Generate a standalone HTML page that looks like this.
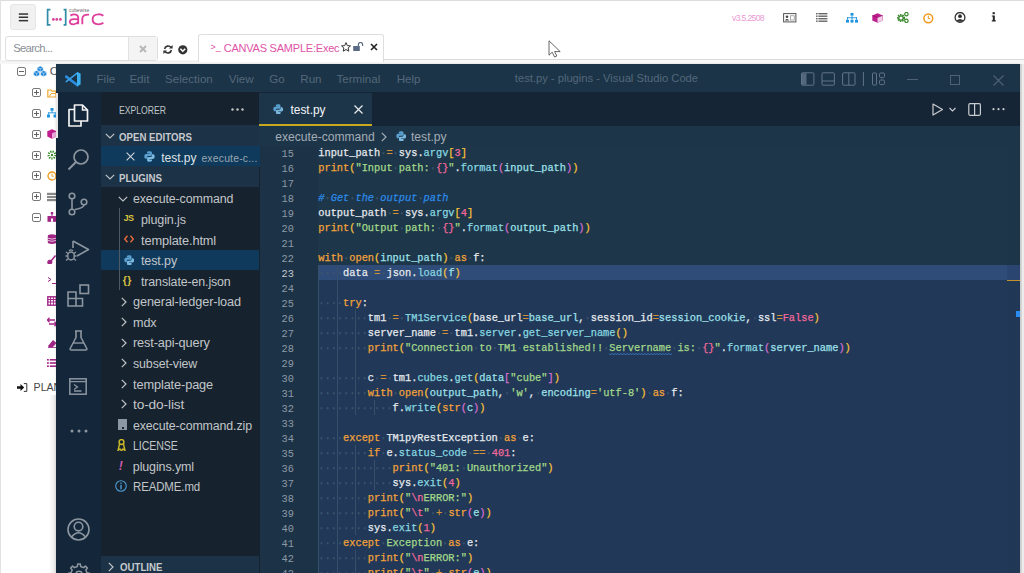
<!DOCTYPE html>
<html><head><meta charset="utf-8">
<style>
*{margin:0;padding:0;box-sizing:border-box}
html,body{width:1024px;height:573px;overflow:hidden;background:#fff}
body{position:relative;font-family:"Liberation Sans",sans-serif}
.a{position:absolute}
.txt{position:absolute;white-space:pre;line-height:1}
/* ---- vscode ---- */
.ln{position:absolute;left:318.3px;height:15px;line-height:15px;font-family:"Liberation Mono",monospace;font-size:10.32px;white-space:pre;color:#e6eaee;-webkit-text-stroke:0.25px currentColor}
.ws{color:#3f5870}
.num{position:absolute;left:262px;width:32px;text-align:right;height:15px;line-height:15px;font-family:"Liberation Mono",monospace;font-size:10.32px;color:#8d9aa6}
.num.act{color:#c4cad0}
.guide{position:absolute;width:1px;background:#36506a}
.row{position:absolute;left:100px;width:159px;height:20.57px}
.row .t{position:absolute;top:0;line-height:20.57px;font-size:12.1px;color:#c2c6ca;white-space:pre}
.chev{position:absolute;width:6px;height:6px;border-right:1.3px solid #c0c4c8;border-bottom:1.3px solid #c0c4c8}
.aicon{position:absolute;left:56px;width:44px}
</style></head><body>

<!-- ============ background web app ============ -->
<div class="a" style="left:0;top:0;width:1024px;height:1px;background:#dcdcdc"></div>
<div class="a" style="left:0;top:0;width:1px;height:573px;background:#e2e2e2"></div>

<!-- hamburger -->
<div class="a" style="left:10px;top:4px;width:26px;height:25.5px;background:#f1f1f1;border:1px solid #e6e6e6;border-radius:3px"></div>
<svg class="a" style="left:18px;top:12px" width="11" height="11" viewBox="0 0 11 11"><g fill="#333"><rect x="0.8" y="1.3" width="9.3" height="1.5"/><rect x="0.8" y="4.5" width="9.3" height="1.5"/><rect x="0.8" y="7.9" width="9.3" height="1.5"/></g></svg>

<!-- logo -->
<svg class="a" style="left:44px;top:5px" width="64" height="24" viewBox="0 0 64 24">
  <path d="M6.4 4.6 H3.6 V19.8 H6.4" fill="none" stroke="#2f8ba6" stroke-width="1.7"/>
  <path d="M19.6 4.6 H21.7 V19.8 H19.6" fill="none" stroke="#2f8ba6" stroke-width="1.7"/>
  <circle cx="9.4" cy="14.4" r="1.4" fill="#d9419a"/>
  <circle cx="12.8" cy="14.4" r="1.4" fill="#d9419a"/>
  <circle cx="16.4" cy="14.4" r="1.4" fill="#d9419a"/>
  <path d="M26.4 10.6 Q29.5 8.6 32.6 9.8 Q34.2 10.5 34.2 12.6 V19.2 M34.2 14.4 Q26 13.4 25.8 16.6 Q25.8 19.4 29.6 19.3 Q32.8 19.1 34.2 16.8" fill="none" stroke="#df3f9c" stroke-width="1.85"/>
  <path d="M38.3 19.3 V14 Q38.3 9.4 45 9.6" fill="none" stroke="#df3f9c" stroke-width="1.85"/>
  <path d="M59.4 10.8 Q57.4 9.2 54.4 9.3 Q48.6 9.5 48.6 14.3 Q48.6 19.2 54.4 19.3 Q57.4 19.3 59.4 17.8" fill="none" stroke="#df3f9c" stroke-width="1.85"/>
</svg>
<div class="txt" style="left:69px;top:9px;font-size:4.6px;color:#666;letter-spacing:0.15px">cubewise</div>

<!-- version + top icons -->
<div class="txt" style="left:732px;top:14.4px;font-size:8.6px;color:#e99ad4;letter-spacing:-0.64px">v3.5.2508</div>
<!-- id card -->
<svg class="a" style="left:783px;top:12.5px" width="14" height="10" viewBox="0 0 14 10">
  <rect x="0.6" y="0.6" width="12.3" height="8.3" fill="#fff" stroke="#555" stroke-width="1"/>
  <circle cx="4" cy="3.8" r="1.3" fill="#444"/><path d="M1.9 7.4 Q4 4.8 6.1 7.4Z" fill="#444"/>
  <rect x="7.4" y="2.8" width="3.8" height="4.2" fill="none" stroke="#888" stroke-width="0.7"/>
</svg>
<!-- list -->
<svg class="a" style="left:815.5px;top:12.8px" width="12" height="9" viewBox="0 0 12 9">
  <g fill="#666"><rect x="0" y="0" width="1.6" height="1.4"/><rect x="2.4" y="0" width="9" height="1.4"/>
  <rect x="0" y="2.5" width="1.6" height="1.4"/><rect x="2.4" y="2.5" width="9" height="1.4"/>
  <rect x="0" y="5" width="1.6" height="1.4"/><rect x="2.4" y="5" width="9" height="1.4"/>
  <rect x="0" y="7.5" width="1.6" height="1.4"/><rect x="2.4" y="7.5" width="9" height="1.4"/></g>
</svg>
<!-- sitemap -->
<svg class="a" style="left:845.5px;top:12.5px" width="12" height="10" viewBox="0 0 12 10">
  <g fill="#1e93de"><rect x="4.5" y="0" width="3" height="2.6"/><rect x="0" y="6.8" width="3" height="2.8"/><rect x="4.5" y="6.8" width="3" height="2.8"/><rect x="9" y="6.8" width="3" height="2.8"/>
  <rect x="5.6" y="2.6" width="0.9" height="4.2"/><rect x="1.1" y="4.3" width="9.9" height="0.9"/><rect x="1.1" y="4.3" width="0.9" height="2.5"/><rect x="10.1" y="4.3" width="0.9" height="2.5"/></g>
</svg>
<!-- cube -->
<svg class="a" style="left:871.5px;top:12.8px" width="11" height="10" viewBox="0 0 11 10">
  <path d="M5.5 0.3 L10.7 2.4 V7.6 L5.5 9.8 L0.3 7.6 V2.4Z" fill="#c01d8e"/>
  <path d="M5.5 4.4 L10.5 2.5 V7.5 L5.5 9.6Z" fill="#f3d0ea"/>
  <path d="M0.3 2.4 L5.5 4.5 L10.7 2.4" fill="none" stroke="#7a0f5a" stroke-width="0.5"/>
</svg>
<!-- cogs -->
<svg class="a" style="left:897px;top:12px" width="12" height="11" viewBox="0 0 12 11">
  <circle cx="4" cy="6" r="3.2" fill="none" stroke="#3b8a2e" stroke-width="1.8" stroke-dasharray="1.4 0.9"/>
  <circle cx="4" cy="6" r="2.2" fill="none" stroke="#3b8a2e" stroke-width="1.3"/>
  <circle cx="9.4" cy="2.2" r="1.7" fill="none" stroke="#3b8a2e" stroke-width="1.2"/>
  <circle cx="9.4" cy="8.8" r="1.7" fill="none" stroke="#3b8a2e" stroke-width="1.2"/>
</svg>
<!-- clock -->
<svg class="a" style="left:923px;top:12.6px" width="11" height="11" viewBox="0 0 11 11">
  <circle cx="5.3" cy="5.3" r="4.4" fill="none" stroke="#ef9a1c" stroke-width="1.5"/>
  <path d="M5.3 2.6 V5.6 H7.2" fill="none" stroke="#ef9a1c" stroke-width="1"/>
</svg>
<!-- user -->
<svg class="a" style="left:953.5px;top:12px" width="13" height="11" viewBox="0 0 13 11">
  <circle cx="6" cy="5.4" r="4.9" fill="none" stroke="#333" stroke-width="1.3"/>
  <circle cx="6" cy="4.2" r="1.9" fill="#333"/>
  <path d="M2.6 8.6 Q6 5.2 9.4 8.6 L8 9.8 H4Z" fill="#333"/>
</svg>
<!-- info -->
<svg class="a" style="left:990.5px;top:12px" width="6" height="10" viewBox="0 0 6 10">
  <rect x="1.6" y="0.2" width="2.2" height="2" fill="#222"/>
  <path d="M0.8 3.4 H3.8 V8.2 H4.8 V9.4 H0.8 V8.2 H1.8 V4.6 H0.8Z" fill="#222"/>
</svg>

<!-- search -->
<div class="a" style="left:0;top:59.6px;width:1024px;height:4.4px;background:#f7f7f7"></div>

<div class="a" style="left:5px;top:35.5px;width:153px;height:25px;border:1px solid #dedede;border-radius:3px;background:#fff"></div>
<div class="a" style="left:128px;top:36.5px;width:29px;height:23px;background:#f4f4f4;border-left:1px solid #e2e2e2"></div>
<div class="txt" style="left:13.2px;top:43px;font-size:11.3px;color:#8a8f95;letter-spacing:-0.7px">Search...</div>
<svg class="a" style="left:139px;top:45px" width="8" height="8" viewBox="0 0 8 8"><path d="M1 1 L7 7 M7 1 L1 7" stroke="#b6b6b6" stroke-width="1.8"/></svg>
<!-- refresh -->
<svg class="a" style="left:162.5px;top:44.5px" width="10" height="9" viewBox="0 0 10 9">
  <path d="M1.6 4 A3.6 3.6 0 0 1 8 2.4" fill="none" stroke="#333" stroke-width="1.6"/>
  <path d="M8.4 5 A3.6 3.6 0 0 1 2 6.6" fill="none" stroke="#333" stroke-width="1.6"/>
  <path d="M9.6 0 V3.6 H6Z" fill="#333"/><path d="M0.4 9 V5.4 H4Z" fill="#333"/>
</svg>
<!-- chevron circle -->
<svg class="a" style="left:177.5px;top:44.5px" width="10" height="10" viewBox="0 0 10 10">
  <circle cx="4.8" cy="4.8" r="4.6" fill="#333"/>
  <path d="M2.4 3.8 L4.8 6.2 L7.2 3.8" fill="none" stroke="#fff" stroke-width="1.6"/>
</svg>

<!-- lines under header -->
<div class="a" style="left:0;top:61.2px;width:198px;height:1px;background:#efefef"></div>
<div class="a" style="left:383.5px;top:58.6px;width:641px;height:1px;background:#dadada"></div>
<!-- canvas tab -->
<div class="a" style="left:197.5px;top:33.7px;width:186px;height:28px;background:#fff;border:1px solid #dedede;border-bottom:none;border-radius:3px 3px 0 0"></div>
<div class="txt" style="left:210.5px;top:43px;font-size:9px;color:#e052a8">&gt;_</div>
<div class="txt" style="left:223.7px;top:42.5px;font-size:11px;color:#e052a8;letter-spacing:-0.22px">CANVAS SAMPLE:Exec</div>
<svg class="a" style="left:340.5px;top:41.5px" width="10" height="10" viewBox="0 0 10 10">
  <path d="M5 0.6 L6.3 3.6 L9.5 3.9 L7.1 6 L7.8 9.2 L5 7.5 L2.2 9.2 L2.9 6 L0.5 3.9 L3.7 3.6Z" fill="none" stroke="#333" stroke-width="1"/>
</svg>
<svg class="a" style="left:353px;top:42px" width="11" height="9" viewBox="0 0 11 9">
  <rect x="0.2" y="4" width="6.6" height="5" fill="#5a6a84"/>
  <path d="M5.4 4 V2.6 A2.1 2.1 0 0 1 9.6 2.6 V4" fill="none" stroke="#5a6a84" stroke-width="1.2"/>
</svg>
<svg class="a" style="left:370px;top:43px" width="8" height="8" viewBox="0 0 8 8"><path d="M1 1 L7 7 M7 1 L1 7" stroke="#222" stroke-width="1.6"/></svg>

<!-- mouse cursor -->
<svg class="a" style="left:547.5px;top:39.5px" width="14" height="19" viewBox="0 0 14 19">
  <path d="M1 0.8 V15.2 L4.2 12.2 L6.6 17 L8.8 16 L6.6 11.6 H12.2Z" fill="#fff" stroke="#555" stroke-width="0.9" stroke-linejoin="round"/>
</svg>

<!-- left tree (background) -->
<svg class="a" style="left:17px;top:67px" width="9" height="9" viewBox="0 0 9 9"><rect x="0.5" y="0.5" width="8" height="8" rx="1.5" fill="#fff" stroke="#6a6a6a" stroke-width="0.9"/><path d="M2 4.5 H7" stroke="#555" stroke-width="0.9"/></svg>
<svg class="a" style="left:32.5px;top:66px" width="15" height="12" viewBox="0 0 15 12"><path d="M4.2 1.4 L7.2 0 L10.2 1.4 V4.6 L7.2 6 L4.2 4.6Z" fill="#1e86d8" stroke="#fff" stroke-width="0.5"/><path d="M4.2 1.4 L7.2 2.8 L10.2 1.4 M7.2 2.8 V6" fill="none" stroke="#cfe6f8" stroke-width="0.6"/><path d="M0.6 6.0 L3.6 4.6 L6.6 6.0 V9.2 L3.6 10.6 L0.6 9.2Z" fill="#1e86d8" stroke="#fff" stroke-width="0.5"/><path d="M0.6 6.0 L3.6 7.3999999999999995 L6.6 6.0 M3.6 7.3999999999999995 V10.6" fill="none" stroke="#cfe6f8" stroke-width="0.6"/><path d="M7.6 6.0 L10.6 4.6 L13.6 6.0 V9.2 L10.6 10.6 L7.6 9.2Z" fill="#1e86d8" stroke="#fff" stroke-width="0.5"/><path d="M7.6 6.0 L10.6 7.3999999999999995 L13.6 6.0 M10.6 7.3999999999999995 V10.6" fill="none" stroke="#cfe6f8" stroke-width="0.6"/></svg>
<div class="txt" style="left:49.8px;top:66px;font-size:11.5px;color:#555">C</div>

<svg class="a" style="left:32.3px;top:88.2px" width="9" height="9" viewBox="0 0 9 9"><rect x="0.5" y="0.5" width="8" height="8" rx="1.5" fill="#fff" stroke="#6a6a6a" stroke-width="0.9"/><path d="M2 4.5 H7" stroke="#555" stroke-width="0.9"/><path d="M4.5 2 V7" stroke="#555" stroke-width="0.9"/></svg><svg class="a" style="left:32.3px;top:109.0px" width="9" height="9" viewBox="0 0 9 9"><rect x="0.5" y="0.5" width="8" height="8" rx="1.5" fill="#fff" stroke="#6a6a6a" stroke-width="0.9"/><path d="M2 4.5 H7" stroke="#555" stroke-width="0.9"/><path d="M4.5 2 V7" stroke="#555" stroke-width="0.9"/></svg><svg class="a" style="left:32.3px;top:129.79999999999998px" width="9" height="9" viewBox="0 0 9 9"><rect x="0.5" y="0.5" width="8" height="8" rx="1.5" fill="#fff" stroke="#6a6a6a" stroke-width="0.9"/><path d="M2 4.5 H7" stroke="#555" stroke-width="0.9"/><path d="M4.5 2 V7" stroke="#555" stroke-width="0.9"/></svg><svg class="a" style="left:32.3px;top:150.6px" width="9" height="9" viewBox="0 0 9 9"><rect x="0.5" y="0.5" width="8" height="8" rx="1.5" fill="#fff" stroke="#6a6a6a" stroke-width="0.9"/><path d="M2 4.5 H7" stroke="#555" stroke-width="0.9"/><path d="M4.5 2 V7" stroke="#555" stroke-width="0.9"/></svg><svg class="a" style="left:32.3px;top:171.39999999999998px" width="9" height="9" viewBox="0 0 9 9"><rect x="0.5" y="0.5" width="8" height="8" rx="1.5" fill="#fff" stroke="#6a6a6a" stroke-width="0.9"/><path d="M2 4.5 H7" stroke="#555" stroke-width="0.9"/><path d="M4.5 2 V7" stroke="#555" stroke-width="0.9"/></svg><svg class="a" style="left:32.3px;top:192.2px" width="9" height="9" viewBox="0 0 9 9"><rect x="0.5" y="0.5" width="8" height="8" rx="1.5" fill="#fff" stroke="#6a6a6a" stroke-width="0.9"/><path d="M2 4.5 H7" stroke="#555" stroke-width="0.9"/><path d="M4.5 2 V7" stroke="#555" stroke-width="0.9"/></svg><svg class="a" style="left:32.3px;top:213.0px" width="9" height="9" viewBox="0 0 9 9"><rect x="0.5" y="0.5" width="8" height="8" rx="1.5" fill="#fff" stroke="#6a6a6a" stroke-width="0.9"/><path d="M2 4.5 H7" stroke="#555" stroke-width="0.9"/></svg><svg class="a" style="left:47px;top:87.5px" width="10" height="10" viewBox="0 0 10 10"><path d="M0.8 2 H4 L5 3.2 H9 V9 H0.8Z" fill="none" stroke="#f0a830" stroke-width="1.2"/><path d="M2 9 L4 5.5 H10" fill="none" stroke="#f0a830" stroke-width="1"/></svg><svg class="a" style="left:47px;top:108.3px" width="10" height="10" viewBox="0 0 10 10"><g fill="#1e93de"><rect x="3.5" y="0" width="3" height="2.8"/><rect x="0" y="6.5" width="3" height="3"/><rect x="6.5" y="6.5" width="3" height="3"/><rect x="4.6" y="2.8" width="0.9" height="2"/><rect x="1.2" y="4.4" width="7.4" height="0.9"/><rect x="1.2" y="4.4" width="0.9" height="2.2"/><rect x="7.8" y="4.4" width="0.9" height="2.2"/></g></svg><svg class="a" style="left:47px;top:129.1px" width="10" height="10" viewBox="0 0 10 10"><path d="M5 0.3 L9.7 2.3 V7.5 L5 9.7 L0.3 7.5 V2.3Z" fill="#c01d8e"/><path d="M5 4.3 L9.5 2.4 V7.4 L5 9.5Z" fill="#e8a8d8"/></svg><svg class="a" style="left:47px;top:149.9px" width="10" height="10" viewBox="0 0 10 10"><circle cx="5" cy="5" r="3.4" fill="none" stroke="#3b8a2e" stroke-width="2.2" stroke-dasharray="1.3 1"/><circle cx="5" cy="5" r="1.2" fill="#3b8a2e"/></svg><svg class="a" style="left:47px;top:170.7px" width="10" height="10" viewBox="0 0 10 10"><circle cx="5" cy="5" r="4" fill="none" stroke="#ef9a1c" stroke-width="1.3"/><path d="M5 2.6 V5.2 H6.8" fill="none" stroke="#ef9a1c" stroke-width="0.9"/></svg><svg class="a" style="left:47px;top:191.5px" width="10" height="10" viewBox="0 0 10 10"><g fill="#888"><rect x="0" y="0.8" width="10" height="2.2"/><rect x="0" y="3.9" width="10" height="2.2"/><rect x="0" y="7" width="10" height="2.2"/></g></svg><svg class="a" style="left:47px;top:212.3px" width="10" height="10" viewBox="0 0 10 10"><g fill="#a02585"><rect x="3.8" y="0" width="2.4" height="2.5"/><rect x="0.5" y="4" width="9" height="5.8"/><rect x="4.5" y="2.5" width="1" height="1.5"/></g><rect x="4" y="6.5" width="2" height="3.3" fill="#fff"/></svg><svg class="a" style="left:47px;top:233.6px" width="10" height="10" viewBox="0 0 10 10"><g fill="#a02585"><ellipse cx="5" cy="2" rx="4.2" ry="1.7"/><rect x="0.8" y="2" width="8.4" height="6.3"/><ellipse cx="5" cy="8.3" rx="4.2" ry="1.7"/></g><path d="M0.8 4.2 Q5 6 9.2 4.2 M0.8 6.4 Q5 8.2 9.2 6.4" fill="none" stroke="#fff" stroke-width="0.7"/></svg><svg class="a" style="left:47px;top:254.4px" width="10" height="10" viewBox="0 0 10 10"><path d="M1 8.5 Q1 6.5 3 6.6 Q5 6.8 4.6 8.6 Q4 10 2.4 9.8 Q1 9.6 1 8.5Z M4 7 L8.5 1.5" fill="#a02585" stroke="#a02585" stroke-width="1.5"/></svg><svg class="a" style="left:47px;top:275.2px" width="10" height="10" viewBox="0 0 10 10"><path d="M1 2.5 L4 4.5 L1 6.5" fill="none" stroke="#a02585" stroke-width="1"/><path d="M5 8.5 H9.5" stroke="#a02585" stroke-width="1"/></svg><svg class="a" style="left:47px;top:296.0px" width="10" height="10" viewBox="0 0 10 10"><rect x="0.8" y="0.8" width="8.4" height="8.4" fill="none" stroke="#a02585" stroke-width="1.4"/><path d="M0.8 3.5 H9.2 M0.8 6 H9.2 M3.6 0.8 V9.2 M6.4 0.8 V9.2" stroke="#a02585" stroke-width="1"/></svg><svg class="a" style="left:47px;top:316.8px" width="10" height="10" viewBox="0 0 10 10"><path d="M0 3 H8 M2.5 0.8 L0.3 3 L2.5 5.2 M10 7 H2 M7.5 4.8 L9.7 7 L7.5 9.2" fill="none" stroke="#a02585" stroke-width="1.3"/></svg><svg class="a" style="left:47px;top:337.6px" width="10" height="10" viewBox="0 0 10 10"><path d="M1 8 L6 2 L9.5 5 L5.5 9.5 H2Z" fill="#a02585"/><path d="M1 9.5 H9.5" stroke="#a02585" stroke-width="0.8"/></svg><svg class="a" style="left:47px;top:358.4px" width="10" height="10" viewBox="0 0 10 10"><g fill="#a02585"><rect x="0" y="1" width="1.8" height="1.6"/><rect x="2.8" y="1" width="7.2" height="1.6"/><rect x="0" y="4.2" width="1.8" height="1.6"/><rect x="2.8" y="4.2" width="7.2" height="1.6"/><rect x="0" y="7.4" width="1.8" height="1.6"/><rect x="2.8" y="7.4" width="7.2" height="1.6"/></g></svg>

<svg class="a" style="left:17px;top:382.5px" width="11" height="9" viewBox="0 0 11 9"><path d="M0 3.3 H3.5 V1 L7.2 4.5 L3.5 8 V5.7 H0Z" fill="#111"/><path d="M6.8 0.6 H9.8 V8.4 H6.8" fill="none" stroke="#333" stroke-width="1"/></svg>
<div class="txt" style="left:33.6px;top:382.4px;font-size:10.6px;color:#444">PLAN</div>

<!-- ============ VS Code window ============ -->
<div class="a" style="left:49px;top:395px;width:7px;height:178px;background:linear-gradient(90deg,rgba(230,230,230,0),rgba(225,225,225,0.9))"></div>
<div class="a" style="left:1020px;top:64px;width:4px;height:509px;background:#ececec"></div>
<div class="a" style="left:1020px;top:64px;width:1.5px;height:509px;background:#d8d8d8"></div>
<div class="a" style="left:56px;top:64px;width:964px;height:509px;background:#1b3044;box-shadow:0 0 2px rgba(0,0,0,0.15)"></div>
<!-- title bar -->
<div class="a" style="left:56px;top:64px;width:964px;height:28px;background:#1b3447"></div>
<div class="txt" style="left:96.5px;top:72.8px;font-size:11.6px;color:#54687b">File</div><div class="txt" style="left:129.4px;top:72.8px;font-size:11.6px;color:#54687b">Edit</div><div class="txt" style="left:165.1px;top:72.8px;font-size:11.6px;color:#54687b">Selection</div><div class="txt" style="left:228.7px;top:72.8px;font-size:11.6px;color:#54687b">View</div><div class="txt" style="left:269.2px;top:72.8px;font-size:11.6px;color:#54687b">Go</div><div class="txt" style="left:300.3px;top:72.8px;font-size:11.6px;color:#54687b">Run</div><div class="txt" style="left:336.5px;top:72.8px;font-size:11.6px;color:#54687b">Terminal</div><div class="txt" style="left:396.7px;top:72.8px;font-size:11.6px;color:#54687b">Help</div><div class="txt" style="left:514.8px;top:73px;font-size:11.2px;color:#54687b">test.py - plugins - Visual Studio Code</div><svg class="a" style="left:64.5px;top:71px" width="17" height="16" viewBox="0 0 17 16">
<path d="M1.2 5.6 L12.5 14.2" stroke="#2b8ee0" stroke-width="2.6" stroke-linecap="round"/>
<path d="M1.2 10.6 L12.5 1.8" stroke="#3aa0e8" stroke-width="1.5" stroke-linecap="round"/>
<path d="M12 1 L15.6 2.6 V13.4 L12 15 Z" fill="#3ab0f0"/>
</svg><svg class="a" style="left:800px;top:72px" width="90" height="14" viewBox="0 0 90 14">
<rect x="1.5" y="0.8" width="12.4" height="12.4" rx="1" fill="none" stroke="#627588" stroke-width="1"/><rect x="2" y="1.3" width="4.5" height="11.4" fill="#627588" opacity="0.8"/>
<rect x="22" y="0.8" width="12.4" height="12.4" rx="1" fill="none" stroke="#627588" stroke-width="1"/><path d="M22 9 H34.4" stroke="#627588"/>
<rect x="42.6" y="0.8" width="12.4" height="12.4" rx="1" fill="none" stroke="#627588" stroke-width="1"/><path d="M48.8 0.8 V13.2" stroke="#627588"/>
<path d="M63.4 0 V14" stroke="#627588" stroke-width="1"/>
<rect x="72.5" y="1" width="4" height="12" rx="0.8" fill="none" stroke="#627588" stroke-width="1"/><rect x="79.5" y="1" width="5" height="4.6" rx="1.2" fill="none" stroke="#627588" stroke-width="1"/><rect x="79.5" y="8" width="5" height="4.6" rx="1.2" fill="none" stroke="#627588" stroke-width="1"/>
</svg><div class="a" style="left:907px;top:79px;width:11px;height:1px;background:#4f6274"></div><div class="a" style="left:950px;top:74.7px;width:10px;height:10px;border:1px solid #4f6274"></div><svg class="a" style="left:992.5px;top:74.5px" width="11" height="11" viewBox="0 0 11 11"><path d="M0.5 0.5 L10.5 10.5 M10.5 0.5 L0.5 10.5" stroke="#4f6274" stroke-width="1.1"/></svg>

<!-- activity bar -->
<div class="a" style="left:56px;top:92px;width:44.5px;height:481px;background:#14263a"></div>
<div class="a" style="left:56px;top:92.5px;width:2px;height:45px;background:#e8e8e8"></div>

<svg class="a" style="left:67px;top:104px" width="22" height="23" viewBox="0 0 22 23">
 <path d="M7.5 1 H15.5 L20.5 6 V17 H7.5Z" fill="none" stroke="#f2f2f2" stroke-width="1.7" stroke-linejoin="round"/>
 <path d="M15.5 1 V6 H20.5" fill="none" stroke="#f2f2f2" stroke-width="1.5"/>
 <path d="M7.5 5.5 H2 V22 H14 V17" fill="none" stroke="#f2f2f2" stroke-width="1.7" stroke-linejoin="round"/>
</svg>
<svg class="a" style="left:67px;top:148px" width="23" height="23" viewBox="0 0 23 23">
 <circle cx="14" cy="9" r="7" fill="none" stroke="#8c96a0" stroke-width="1.7"/><path d="M9 14 L1.5 21.5" stroke="#8c96a0" stroke-width="1.9"/>
</svg>
<svg class="a" style="left:67px;top:192px" width="23" height="24" viewBox="0 0 23 24">
 <circle cx="5" cy="4" r="2.8" fill="none" stroke="#8c96a0" stroke-width="1.6"/><circle cx="5" cy="20" r="2.8" fill="none" stroke="#8c96a0" stroke-width="1.6"/><circle cx="17" cy="10" r="2.8" fill="none" stroke="#8c96a0" stroke-width="1.6"/>
 <path d="M5 6.8 V17.2 M17 12.8 Q17 16 8 17.5" fill="none" stroke="#8c96a0" stroke-width="1.6"/>
</svg>
<svg class="a" style="left:64.5px;top:238.5px" width="25" height="24" viewBox="0 0 25 24">
 <path d="M8 2 L23.5 10.5 L12 17" fill="none" stroke="#8c96a0" stroke-width="1.6" stroke-linejoin="round"/>
 <path d="M8 2 V9" stroke="#8c96a0" stroke-width="1.6"/>
 <ellipse cx="6" cy="17" rx="3.3" ry="4" fill="none" stroke="#8c96a0" stroke-width="1.5"/>
 <path d="M1 13 L3 14.5 M11 13 L9 14.5 M0.5 17 H2.7 M9.3 17 H11.5 M1 21.5 L3 19.8 M11 21.5 L9 19.8 M4 11.8 Q6 10 8 11.8" fill="none" stroke="#8c96a0" stroke-width="1.3"/>
</svg>
<svg class="a" style="left:66.5px;top:283.5px" width="23" height="23" viewBox="0 0 23 23">
 <path d="M1 8 H9 V22 H1Z M1 14.5 H15.5 V22 H9" fill="none" stroke="#8c96a0" stroke-width="1.6"/>
 <rect x="13" y="1" width="8.5" height="8.5" fill="none" stroke="#8c96a0" stroke-width="1.6"/>
</svg>
<svg class="a" style="left:69px;top:329.5px" width="19" height="21" viewBox="0 0 19 21">
 <path d="M6 1 H13 M7 1 V7.5 L1.2 18.5 Q0.8 20 2.3 20 H16.7 Q18.2 20 17.8 18.5 L12 7.5 V1" fill="none" stroke="#8c96a0" stroke-width="1.6" stroke-linejoin="round"/>
 <path d="M4 13 H15" stroke="#8c96a0" stroke-width="1.4"/>
</svg>
<svg class="a" style="left:69px;top:378px" width="18" height="17" viewBox="0 0 18 17">
 <rect x="0.8" y="0.8" width="16.4" height="15.4" fill="none" stroke="#8c96a0" stroke-width="1.5"/>
 <path d="M0.8 3.6 H17.2" stroke="#8c96a0" stroke-width="1.3"/>
 <path d="M5 6.5 L8.5 9 L5 11.5 M5 13 H12.5" fill="none" stroke="#8c96a0" stroke-width="1.3"/>
</svg>
<svg class="a" style="left:69.5px;top:428.5px" width="18" height="4" viewBox="0 0 18 4">
 <circle cx="2" cy="2" r="1.5" fill="#8c96a0"/><circle cx="9" cy="2" r="1.5" fill="#8c96a0"/><circle cx="16" cy="2" r="1.5" fill="#8c96a0"/>
</svg>
<svg class="a" style="left:66.5px;top:518px" width="24" height="24" viewBox="0 0 24 24">
 <circle cx="11.5" cy="11.5" r="10.5" fill="none" stroke="#8c96a0" stroke-width="1.6"/>
 <circle cx="11.5" cy="8.6" r="4.3" fill="none" stroke="#8c96a0" stroke-width="1.6"/>
 <path d="M4.5 19 Q11.5 10.5 18.5 19" fill="none" stroke="#8c96a0" stroke-width="1.6"/>
</svg>
<svg class="a" style="left:66.5px;top:562px" width="24" height="12" viewBox="0 0 24 12"><path d="M20.04 10.87 L22.51 11.13 L22.51 13.87 L20.04 14.13 L18.83 17.03 L20.40 18.96 L18.46 20.90 L16.53 19.33 L13.63 20.54 L13.37 23.01 L10.63 23.01 L10.37 20.54 L7.47 19.33 L5.54 20.90 L3.60 18.96 L5.17 17.03 L3.96 14.13 L1.49 13.87 L1.49 11.13 L3.96 10.87 L5.17 7.97 L3.60 6.04 L5.54 4.10 L7.47 5.67 L10.37 4.46 L10.63 1.99 L13.37 1.99 L13.63 4.46 L16.53 5.67 L18.46 4.10 L20.40 6.04 L18.83 7.97Z" fill="none" stroke="#8c96a0" stroke-width="1.5" stroke-linejoin="round"/><circle cx="12" cy="12.5" r="3.2" fill="none" stroke="#8c96a0" stroke-width="1.5"/></svg>


<!-- sidebar -->
<div class="a" style="left:100.5px;top:92px;width:159px;height:481px;background:#16222d"></div>
<div class="txt" style="left:119.4px;top:104.5px;font-size:10.6px;color:#bfc4c8;transform:scaleX(0.815);transform-origin:0 0">EXPLORER</div><svg class="a" style="left:231px;top:107.5px" width="13" height="3" viewBox="0 0 13 3"><circle cx="1.5" cy="1.5" r="1.2" fill="#c8c8c8"/><circle cx="6.5" cy="1.5" r="1.2" fill="#c8c8c8"/><circle cx="11.5" cy="1.5" r="1.2" fill="#c8c8c8"/></svg><div class="a" style="left:100.5px;top:125.3px;width:158.5px;height:20.5px;background:#1b3247"></div><svg class="a" style="left:105.2px;top:133px" width="10" height="6" viewBox="0 0 10 6"><path d="M0.8 0.8 L5 5 L9.2 0.8" fill="none" stroke="#c0c4c8" stroke-width="1.2"/></svg><div class="txt" style="left:119.4px;top:132.6px;font-size:10.4px;font-weight:bold;color:#c6cacd;transform:scaleX(0.93);transform-origin:0 0">OPEN EDITORS</div><div class="a" style="left:100.5px;top:145.8px;width:159px;height:21px;background:#0f3a5c"></div><svg class="a" style="left:126px;top:152px" width="9" height="9" viewBox="0 0 9 9"><path d="M0.6 0.6 L8.4 8.4 M8.4 0.6 L0.6 8.4" stroke="#d0d4d8" stroke-width="1.1"/></svg><svg class="a" style="left:143.8px;top:151.2px" width="11.0" height="11.0" viewBox="0 0 11 11"><path d="M5.3 0.3 C2.8 0.3 3 1.4 3 1.4 V2.6 H5.6 V3 H2 C0.3 3 0.3 5.4 0.3 5.4 C0.3 7.8 2 7.7 2 7.7 H3 V6.5 C3 5.2 4.2 5 4.2 5 H6.8 C8 5 7.9 3.8 7.9 3.8 V1.6 C7.9 0.4 6.5 0.3 5.3 0.3Z" fill="#5aa0d0"/><path d="M5.7 10.7 C8.2 10.7 8 9.6 8 9.6 V8.4 H5.4 V8 H9 C10.7 8 10.7 5.6 10.7 5.6 C10.7 3.2 9 3.3 9 3.3 H8 V4.5 C8 5.8 6.8 6 6.8 6 H4.2 C3 6 3.1 7.2 3.1 7.2 V9.4 C3.1 10.6 4.5 10.7 5.7 10.7Z" fill="#7ab8e0"/></svg><div class="txt" style="left:161.2px;top:151.5px;font-size:12px;color:#dfe3e6">test.py</div><div class="txt" style="left:201.4px;top:154px;font-size:10.4px;color:#9aa6b0;letter-spacing:0.2px">execute-c...</div><div class="a" style="left:100.5px;top:166.4px;width:158.5px;height:20.6px;background:#1b3247"></div><svg class="a" style="left:105.2px;top:174px" width="10" height="6" viewBox="0 0 10 6"><path d="M0.8 0.8 L5 5 L9.2 0.8" fill="none" stroke="#c0c4c8" stroke-width="1.2"/></svg><div class="txt" style="left:119.4px;top:173.5px;font-size:10.4px;font-weight:bold;color:#c6cacd;transform:scaleX(0.93);transform-origin:0 0">PLUGINS</div><svg class="a" style="left:118px;top:195.785px" width="10" height="6" viewBox="0 0 10 6"><path d="M0.8 0.8 L5 5 L9.2 0.8" fill="none" stroke="#c0c4c8" stroke-width="1.2"/></svg><div class="txt" style="left:133.1px;top:193.4px;font-size:12.5px;letter-spacing:-0.12px;color:#c2c6ca;transform:scaleX(0.992);transform-origin:0 0">execute-command</div><div class="txt" style="left:123.5px;top:214.4px;font-size:9px;font-weight:bold;color:#d8c040;letter-spacing:-0.4px">JS</div><div class="txt" style="left:140.6px;top:214.0px;font-size:12.5px;letter-spacing:-0.12px;color:#c2c6ca;transform:scaleX(1.002);transform-origin:0 0">plugin.js</div><svg class="a" style="left:123.5px;top:235.4px" width="10" height="8" viewBox="0 0 10 8"><path d="M3.5 0.8 L0.8 4 L3.5 7.2 M6.5 0.8 L9.2 4 L6.5 7.2" fill="none" stroke="#e06a3a" stroke-width="1.4"/></svg><div class="txt" style="left:140.6px;top:234.5px;font-size:12.5px;letter-spacing:-0.12px;color:#c2c6ca;transform:scaleX(1.022);transform-origin:0 0">template.html</div><div class="a" style="left:100.5px;top:249.5px;width:158.5px;height:20.6px;background:#0f3a5c"></div><svg class="a" style="left:123.5px;top:254.695px" width="10.45" height="10.45" viewBox="0 0 11 11"><path d="M5.3 0.3 C2.8 0.3 3 1.4 3 1.4 V2.6 H5.6 V3 H2 C0.3 3 0.3 5.4 0.3 5.4 C0.3 7.8 2 7.7 2 7.7 H3 V6.5 C3 5.2 4.2 5 4.2 5 H6.8 C8 5 7.9 3.8 7.9 3.8 V1.6 C7.9 0.4 6.5 0.3 5.3 0.3Z" fill="#5aa0d0"/><path d="M5.7 10.7 C8.2 10.7 8 9.6 8 9.6 V8.4 H5.4 V8 H9 C10.7 8 10.7 5.6 10.7 5.6 C10.7 3.2 9 3.3 9 3.3 H8 V4.5 C8 5.8 6.8 6 6.8 6 H4.2 C3 6 3.1 7.2 3.1 7.2 V9.4 C3.1 10.6 4.5 10.7 5.7 10.7Z" fill="#7ab8e0"/></svg><div class="txt" style="left:140.6px;top:255.1px;font-size:12.5px;letter-spacing:-0.12px;color:#c2c6ca;transform:scaleX(1.003);transform-origin:0 0">test.py</div><div class="txt" style="left:122.8px;top:274.8px;font-size:10.5px;font-weight:bold;color:#d8c040;letter-spacing:0.4px">{}</div><div class="txt" style="left:140.6px;top:275.7px;font-size:12.5px;letter-spacing:-0.12px;color:#c2c6ca;transform:scaleX(0.992);transform-origin:0 0">translate-en.json</div><svg class="a" style="left:120.5px;top:296.63500000000005px" width="6" height="10" viewBox="0 0 6 10"><path d="M0.8 0.8 L5 5 L0.8 9.2" fill="none" stroke="#c0c4c8" stroke-width="1.2"/></svg><div class="txt" style="left:132.9px;top:296.2px;font-size:12.5px;letter-spacing:-0.12px;color:#c2c6ca;transform:scaleX(1.017);transform-origin:0 0">general-ledger-load</div><svg class="a" style="left:120.5px;top:317.20500000000004px" width="6" height="10" viewBox="0 0 6 10"><path d="M0.8 0.8 L5 5 L0.8 9.2" fill="none" stroke="#c0c4c8" stroke-width="1.2"/></svg><div class="txt" style="left:132.9px;top:316.8px;font-size:12.5px;letter-spacing:-0.12px;color:#c2c6ca;transform:scaleX(1.01);transform-origin:0 0">mdx</div><svg class="a" style="left:120.5px;top:337.77500000000003px" width="6" height="10" viewBox="0 0 6 10"><path d="M0.8 0.8 L5 5 L0.8 9.2" fill="none" stroke="#c0c4c8" stroke-width="1.2"/></svg><div class="txt" style="left:132.9px;top:337.4px;font-size:12.5px;letter-spacing:-0.12px;color:#c2c6ca;transform:scaleX(1.018);transform-origin:0 0">rest-api-query</div><svg class="a" style="left:120.5px;top:358.345px" width="6" height="10" viewBox="0 0 6 10"><path d="M0.8 0.8 L5 5 L0.8 9.2" fill="none" stroke="#c0c4c8" stroke-width="1.2"/></svg><div class="txt" style="left:132.9px;top:357.9px;font-size:12.5px;letter-spacing:-0.12px;color:#c2c6ca;transform:scaleX(0.992);transform-origin:0 0">subset-view</div><svg class="a" style="left:120.5px;top:378.915px" width="6" height="10" viewBox="0 0 6 10"><path d="M0.8 0.8 L5 5 L0.8 9.2" fill="none" stroke="#c0c4c8" stroke-width="1.2"/></svg><div class="txt" style="left:132.9px;top:378.5px;font-size:12.5px;letter-spacing:-0.12px;color:#c2c6ca;transform:scaleX(1.022);transform-origin:0 0">template-page</div><svg class="a" style="left:120.5px;top:399.485px" width="6" height="10" viewBox="0 0 6 10"><path d="M0.8 0.8 L5 5 L0.8 9.2" fill="none" stroke="#c0c4c8" stroke-width="1.2"/></svg><div class="txt" style="left:132.9px;top:399.1px;font-size:12.5px;letter-spacing:-0.12px;color:#c2c6ca;transform:scaleX(1.097);transform-origin:0 0">to-do-list</div><div class="a" style="left:118.2px;top:419.3px;width:9px;height:11px;background:#8b97a3"></div><div class="a" style="left:121.5px;top:426.6px;width:2.5px;height:2px;background:#16222d"></div><div class="txt" style="left:132.8px;top:419.7px;font-size:12.5px;letter-spacing:-0.12px;color:#c2c6ca;transform:scaleX(0.991);transform-origin:0 0">execute-command.zip</div><svg class="a" style="left:117px;top:439.1px" width="9" height="12" viewBox="0 0 9 12"><circle cx="4.5" cy="3" r="2.4" fill="none" stroke="#c8b82a" stroke-width="1.5"/><path d="M2.5 5 L1 11.5 L3 10 L4.5 11.8 L6 10 L8 11.5 L6.5 5" fill="none" stroke="#c8b82a" stroke-width="1.4"/></svg><div class="txt" style="left:132.8px;top:440.2px;font-size:12.5px;letter-spacing:-0.12px;color:#c2c6ca;transform:scaleX(0.848);transform-origin:0 0">LICENSE</div><div class="txt" style="left:118.8px;top:459.7px;font-size:12px;font-style:italic;font-weight:bold;color:#d05ab0">!</div><div class="txt" style="left:132.8px;top:460.8px;font-size:12.5px;letter-spacing:-0.12px;color:#c2c6ca;transform:scaleX(1.0);transform-origin:0 0">plugins.yml</div><svg class="a" style="left:114.8px;top:480.3px" width="12" height="12" viewBox="0 0 12 12"><circle cx="6" cy="6" r="5.3" fill="none" stroke="#4a9ad0" stroke-width="1.1"/><rect x="5.3" y="2.6" width="1.4" height="1.3" fill="#4a9ad0"/><rect x="5.3" y="4.8" width="1.4" height="4.6" fill="#4a9ad0"/></svg><div class="txt" style="left:132.8px;top:481.4px;font-size:12.5px;letter-spacing:-0.12px;color:#c2c6ca;transform:scaleX(0.916);transform-origin:0 0">README.md</div><div class="a" style="left:119px;top:208px;width:1px;height:82px;background:#4f5a66"></div><div class="a" style="left:100.5px;top:556.3px;width:158.5px;height:17px;background:#1b3247"></div><svg class="a" style="left:108px;top:562px" width="6" height="10" viewBox="0 0 6 10"><path d="M0.8 0.8 L5 5 L0.8 9.2" fill="none" stroke="#c0c4c8" stroke-width="1.2"/></svg><div class="txt" style="left:119.9px;top:562.8px;font-size:10.4px;font-weight:bold;color:#c6cacd;transform:scaleX(0.93);transform-origin:0 0">OUTLINE</div>

<!-- editor -->
<div class="a" style="left:259px;top:92px;width:761px;height:34px;background:#162536"></div>
<div class="a" style="left:259.4px;top:92.5px;width:112.4px;height:33.5px;background:#1c3549"></div>
<div class="a" style="left:259.4px;top:124px;width:112.4px;height:2px;background:#c9a820"></div>
<svg class="a" style="left:273.2px;top:103.6px" width="10.45" height="10.45" viewBox="0 0 11 11"><path d="M5.3 0.3 C2.8 0.3 3 1.4 3 1.4 V2.6 H5.6 V3 H2 C0.3 3 0.3 5.4 0.3 5.4 C0.3 7.8 2 7.7 2 7.7 H3 V6.5 C3 5.2 4.2 5 4.2 5 H6.8 C8 5 7.9 3.8 7.9 3.8 V1.6 C7.9 0.4 6.5 0.3 5.3 0.3Z" fill="#5aa0d0"/><path d="M5.7 10.7 C8.2 10.7 8 9.6 8 9.6 V8.4 H5.4 V8 H9 C10.7 8 10.7 5.6 10.7 5.6 C10.7 3.2 9 3.3 9 3.3 H8 V4.5 C8 5.8 6.8 6 6.8 6 H4.2 C3 6 3.1 7.2 3.1 7.2 V9.4 C3.1 10.6 4.5 10.7 5.7 10.7Z" fill="#7ab8e0"/></svg><div class="txt" style="left:290.5px;top:104.6px;font-size:11.9px;color:#f4f6f8">test.py</div><svg class="a" style="left:354px;top:104.5px" width="9" height="9" viewBox="0 0 9 9"><path d="M0.5 0.5 L8.5 8.5 M8.5 0.5 L0.5 8.5" stroke="#e8ecef" stroke-width="1.2"/></svg><svg class="a" style="left:931.5px;top:102.5px" width="75" height="13" viewBox="0 0 75 13">
<path d="M1 1 L10.5 6.5 L1 12Z" fill="none" stroke="#c8ccd0" stroke-width="1.2" stroke-linejoin="round"/>
<path d="M17.5 5 L20.5 8 L23.5 5" fill="none" stroke="#c8ccd0" stroke-width="1.1"/>
<rect x="36.8" y="0.7" width="11.6" height="11.6" rx="1.2" fill="none" stroke="#c8ccd0" stroke-width="1.2"/><path d="M42.6 0.7 V12.3" stroke="#c8ccd0" stroke-width="1.2"/>
<circle cx="61.5" cy="6.2" r="1.1" fill="#c8ccd0"/><circle cx="66.5" cy="6.2" r="1.1" fill="#c8ccd0"/><circle cx="71.5" cy="6.2" r="1.1" fill="#c8ccd0"/>
</svg>
<div class="a" style="left:259px;top:126px;width:761px;height:20px;background:#1d3549"></div>
<div class="txt" style="left:275.3px;top:130.5px;font-size:12.1px;color:#a3adb6">execute-command</div><svg class="a" style="left:380.5px;top:131.5px" width="6" height="10" viewBox="0 0 6 10"><path d="M0.8 0.8 L5 5 L0.8 9.2" fill="none" stroke="#a3adb6" stroke-width="1.2"/></svg><svg class="a" style="left:395.5px;top:130.5px" width="10.45" height="10.45" viewBox="0 0 11 11"><path d="M5.3 0.3 C2.8 0.3 3 1.4 3 1.4 V2.6 H5.6 V3 H2 C0.3 3 0.3 5.4 0.3 5.4 C0.3 7.8 2 7.7 2 7.7 H3 V6.5 C3 5.2 4.2 5 4.2 5 H6.8 C8 5 7.9 3.8 7.9 3.8 V1.6 C7.9 0.4 6.5 0.3 5.3 0.3Z" fill="#5aa0d0"/><path d="M5.7 10.7 C8.2 10.7 8 9.6 8 9.6 V8.4 H5.4 V8 H9 C10.7 8 10.7 5.6 10.7 5.6 C10.7 3.2 9 3.3 9 3.3 H8 V4.5 C8 5.8 6.8 6 6.8 6 H4.2 C3 6 3.1 7.2 3.1 7.2 V9.4 C3.1 10.6 4.5 10.7 5.7 10.7Z" fill="#7ab8e0"/></svg><div class="txt" style="left:411px;top:130.5px;font-size:12.1px;color:#a3adb6">test.py</div>
<!-- code area -->
<div class="a" style="left:259.5px;top:146px;width:58.5px;height:427px;background:#1c3246"></div>
<div class="a" style="left:318px;top:146px;width:702px;height:119px;background:#1d3649"></div>
<div class="a" style="left:318px;top:279.7px;width:702px;height:294px;background:#213858"></div>
<div class="a" style="left:318px;top:264.7px;width:702px;height:15px;background:#2f4b77"></div>
<div class="a" style="left:1006.5px;top:146px;width:13.5px;height:119px;background:#1c3548"></div>
<div class="a" style="left:1006.5px;top:279.7px;width:13.5px;height:294px;background:#203755"></div>
<div class="a" style="left:1006.5px;top:264.7px;width:13.5px;height:15px;background:#2a4670"></div>
<div class="a" style="left:1007px;top:279.8px;width:12.5px;height:1.6px;background:#c4902a"></div>
<div class="a" style="left:1016px;top:310.8px;width:3.5px;height:6px;background:#2a8cf0"></div>
<div class="guide" style="left:318.0px;top:264.7px;height:315.0px"></div><div class="guide" style="left:337.0px;top:264.7px;height:315.0px"></div><div class="guide" style="left:355.0px;top:309.7px;height:105.0px"></div><div class="guide" style="left:355.0px;top:444.7px;height:90.0px"></div><div class="guide" style="left:355.0px;top:549.7px;height:30.0px"></div><div class="guide" style="left:374.0px;top:399.7px;height:15.0px"></div><div class="guide" style="left:374.0px;top:459.7px;height:30.0px"></div><svg class="a" style="left:609px;top:352.5px" width="63" height="3" viewBox="0 0 63 3"><polyline points="0.0,0.4 1.5,1.9 3.0,0.4 4.5,1.9 6.0,0.4 7.5,1.9 9.0,0.4 10.5,1.9 12.0,0.4 13.5,1.9 15.0,0.4 16.5,1.9 18.0,0.4 19.5,1.9 21.0,0.4 22.5,1.9 24.0,0.4 25.5,1.9 27.0,0.4 28.5,1.9 30.0,0.4 31.5,1.9 33.0,0.4 34.5,1.9 36.0,0.4 37.5,1.9 39.0,0.4 40.5,1.9 42.0,0.4 43.5,1.9 45.0,0.4 46.5,1.9 48.0,0.4 49.5,1.9 51.0,0.4 52.5,1.9 54.0,0.4 55.5,1.9 57.0,0.4 58.5,1.9 60.0,0.4 61.5,1.9 63.0,0.4" fill="none" stroke="#3a84d0" stroke-width="0.9"/></svg>
<div class="num" style="top:146.8px">15</div>
<div class="num" style="top:161.8px">16</div>
<div class="num" style="top:176.8px">17</div>
<div class="num" style="top:191.8px">18</div>
<div class="num" style="top:206.8px">19</div>
<div class="num" style="top:221.8px">20</div>
<div class="num" style="top:236.8px">21</div>
<div class="num" style="top:251.8px">22</div>
<div class="num act" style="top:266.8px">23</div>
<div class="num" style="top:281.8px">24</div>
<div class="num" style="top:296.8px">25</div>
<div class="num" style="top:311.8px">26</div>
<div class="num" style="top:326.8px">27</div>
<div class="num" style="top:341.8px">28</div>
<div class="num" style="top:356.8px">29</div>
<div class="num" style="top:371.8px">30</div>
<div class="num" style="top:386.8px">31</div>
<div class="num" style="top:401.8px">32</div>
<div class="num" style="top:416.8px">33</div>
<div class="num" style="top:431.8px">34</div>
<div class="num" style="top:446.8px">35</div>
<div class="num" style="top:461.8px">36</div>
<div class="num" style="top:476.8px">37</div>
<div class="num" style="top:491.8px">38</div>
<div class="num" style="top:506.8px">39</div>
<div class="num" style="top:521.8px">40</div>
<div class="num" style="top:536.8px">41</div>
<div class="num" style="top:551.8px">42</div>
<div class="num" style="top:566.8px">43</div>
<div class="ln" style="top:146.3px"><span style="color:#e6eaee;">input_path</span><span class="ws">·</span><span style="color:#d39036;">=</span><span class="ws">·</span><span style="color:#e6eaee;">sys</span><span style="color:#e6eaee;">.</span><span style="color:#88d8e0;">argv</span><span style="color:#f7c23a;">[</span><span style="color:#f0689a;">3</span><span style="color:#f7c23a;">]</span></div>
<div class="ln" style="top:161.3px"><span style="color:#f2a23a;">print</span><span style="color:#f7c23a;">(</span><span style="color:#a3d98a;">&quot;Input</span><span class="ws">·</span><span style="color:#a3d98a;">path:</span><span class="ws">·</span><span style="color:#f0689a;">{}</span><span style="color:#a3d98a;">&quot;</span><span style="color:#e6eaee;">.</span><span style="color:#88d8e0;">format</span><span style="color:#d66fd0;">(</span><span style="color:#9ee0ea;">input_path</span><span style="color:#d66fd0;">)</span><span style="color:#f7c23a;">)</span></div>
<div class="ln" style="top:176.3px"></div>
<div class="ln" style="top:191.3px"><span style="color:#2c8ae8;font-style:italic">#</span><span class="ws">·</span><span style="color:#2c8ae8;font-style:italic">Get</span><span class="ws">·</span><span style="color:#2c8ae8;font-style:italic">the</span><span class="ws">·</span><span style="color:#2c8ae8;font-style:italic">output</span><span class="ws">·</span><span style="color:#2c8ae8;font-style:italic">path</span></div>
<div class="ln" style="top:206.3px"><span style="color:#e6eaee;">output_path</span><span class="ws">·</span><span style="color:#d39036;">=</span><span class="ws">·</span><span style="color:#e6eaee;">sys</span><span style="color:#e6eaee;">.</span><span style="color:#88d8e0;">argv</span><span style="color:#f7c23a;">[</span><span style="color:#f0689a;">4</span><span style="color:#f7c23a;">]</span></div>
<div class="ln" style="top:221.3px"><span style="color:#f2a23a;">print</span><span style="color:#f7c23a;">(</span><span style="color:#a3d98a;">&quot;Output</span><span class="ws">·</span><span style="color:#a3d98a;">path:</span><span class="ws">·</span><span style="color:#f0689a;">{}</span><span style="color:#a3d98a;">&quot;</span><span style="color:#e6eaee;">.</span><span style="color:#88d8e0;">format</span><span style="color:#d66fd0;">(</span><span style="color:#9ee0ea;">output_path</span><span style="color:#d66fd0;">)</span><span style="color:#f7c23a;">)</span></div>
<div class="ln" style="top:236.3px"></div>
<div class="ln" style="top:251.3px"><span style="color:#f2a23a;">with</span><span class="ws">·</span><span style="color:#f2a23a;">open</span><span style="color:#f7c23a;">(</span><span style="color:#9ee0ea;">input_path</span><span style="color:#f7c23a;">)</span><span class="ws">·</span><span style="color:#f2a23a;">as</span><span class="ws">·</span><span style="color:#e6eaee;">f</span><span style="color:#e6eaee;">:</span></div>
<div class="ln" style="top:266.3px"><span class="ws">····</span><span style="color:#e6eaee;">data</span><span class="ws">·</span><span style="color:#d39036;">=</span><span class="ws">·</span><span style="color:#e6eaee;">json</span><span style="color:#e6eaee;">.</span><span style="color:#88d8e0;">load</span><span style="color:#f7c23a;">(</span><span style="color:#9ee0ea;">f</span><span style="color:#f7c23a;">)</span></div>
<div class="ln" style="top:281.3px"></div>
<div class="ln" style="top:296.3px"><span class="ws">····</span><span style="color:#f2a23a;">try</span><span style="color:#e6eaee;">:</span></div>
<div class="ln" style="top:311.3px"><span class="ws">········</span><span style="color:#e6eaee;">tm1</span><span class="ws">·</span><span style="color:#d39036;">=</span><span class="ws">·</span><span style="color:#88d8e0;">TM1Service</span><span style="color:#f7c23a;">(</span><span style="color:#e6eaee;">base_url</span><span style="color:#d39036;">=</span><span style="color:#9ee0ea;">base_url</span><span style="color:#e6eaee;">,</span><span class="ws">·</span><span style="color:#e6eaee;">session_id</span><span style="color:#d39036;">=</span><span style="color:#9ee0ea;">session_cookie</span><span style="color:#e6eaee;">,</span><span class="ws">·</span><span style="color:#e6eaee;">ssl</span><span style="color:#d39036;">=</span><span style="color:#f0689a;">False</span><span style="color:#f7c23a;">)</span></div>
<div class="ln" style="top:326.3px"><span class="ws">········</span><span style="color:#e6eaee;">server_name</span><span class="ws">·</span><span style="color:#d39036;">=</span><span class="ws">·</span><span style="color:#e6eaee;">tm1</span><span style="color:#e6eaee;">.</span><span style="color:#88d8e0;">server</span><span style="color:#e6eaee;">.</span><span style="color:#88d8e0;">get_server_name</span><span style="color:#f7c23a;">()</span></div>
<div class="ln" style="top:341.3px"><span class="ws">········</span><span style="color:#f2a23a;">print</span><span style="color:#f7c23a;">(</span><span style="color:#a3d98a;">&quot;Connection</span><span class="ws">·</span><span style="color:#a3d98a;">to</span><span class="ws">·</span><span style="color:#a3d98a;">TM1</span><span class="ws">·</span><span style="color:#a3d98a;">established!!</span><span class="ws">·</span><span style="color:#a3d98a;">Servername</span><span class="ws">·</span><span style="color:#a3d98a;">is:</span><span class="ws">·</span><span style="color:#f0689a;">{}</span><span style="color:#a3d98a;">&quot;</span><span style="color:#e6eaee;">.</span><span style="color:#88d8e0;">format</span><span style="color:#d66fd0;">(</span><span style="color:#9ee0ea;">server_name</span><span style="color:#d66fd0;">)</span><span style="color:#f7c23a;">)</span></div>
<div class="ln" style="top:356.3px"></div>
<div class="ln" style="top:371.3px"><span class="ws">········</span><span style="color:#e6eaee;">c</span><span class="ws">·</span><span style="color:#d39036;">=</span><span class="ws">·</span><span style="color:#e6eaee;">tm1</span><span style="color:#e6eaee;">.</span><span style="color:#88d8e0;">cubes</span><span style="color:#e6eaee;">.</span><span style="color:#88d8e0;">get</span><span style="color:#f7c23a;">(</span><span style="color:#9ee0ea;">data</span><span style="color:#d66fd0;">[</span><span style="color:#a3d98a;">&quot;cube&quot;</span><span style="color:#d66fd0;">]</span><span style="color:#f7c23a;">)</span></div>
<div class="ln" style="top:386.3px"><span class="ws">········</span><span style="color:#f2a23a;">with</span><span class="ws">·</span><span style="color:#f2a23a;">open</span><span style="color:#f7c23a;">(</span><span style="color:#9ee0ea;">output_path</span><span style="color:#e6eaee;">,</span><span class="ws">·</span><span style="color:#a3d98a;">&#x27;w&#x27;</span><span style="color:#e6eaee;">,</span><span class="ws">·</span><span style="color:#9ee0ea;">encoding</span><span style="color:#d39036;">=</span><span style="color:#a3d98a;">&#x27;utf-8&#x27;</span><span style="color:#f7c23a;">)</span><span class="ws">·</span><span style="color:#f2a23a;">as</span><span class="ws">·</span><span style="color:#e6eaee;">f</span><span style="color:#e6eaee;">:</span></div>
<div class="ln" style="top:401.3px"><span class="ws">············</span><span style="color:#e6eaee;">f</span><span style="color:#e6eaee;">.</span><span style="color:#88d8e0;">write</span><span style="color:#f7c23a;">(</span><span style="color:#f2a23a;">str</span><span style="color:#d66fd0;">(</span><span style="color:#9ee0ea;">c</span><span style="color:#d66fd0;">)</span><span style="color:#f7c23a;">)</span></div>
<div class="ln" style="top:416.3px"></div>
<div class="ln" style="top:431.3px"><span class="ws">····</span><span style="color:#f2a23a;">except</span><span class="ws">·</span><span style="color:#e6eaee;">TM1pyRestException</span><span class="ws">·</span><span style="color:#f2a23a;">as</span><span class="ws">·</span><span style="color:#e6eaee;">e</span><span style="color:#e6eaee;">:</span></div>
<div class="ln" style="top:446.3px"><span class="ws">········</span><span style="color:#f2a23a;">if</span><span class="ws">·</span><span style="color:#e6eaee;">e</span><span style="color:#e6eaee;">.</span><span style="color:#88d8e0;">status_code</span><span class="ws">·</span><span style="color:#d39036;">==</span><span class="ws">·</span><span style="color:#f0689a;">401</span><span style="color:#e6eaee;">:</span></div>
<div class="ln" style="top:461.3px"><span class="ws">············</span><span style="color:#f2a23a;">print</span><span style="color:#f7c23a;">(</span><span style="color:#a3d98a;">&quot;401:</span><span class="ws">·</span><span style="color:#a3d98a;">Unauthorized&quot;</span><span style="color:#f7c23a;">)</span></div>
<div class="ln" style="top:476.3px"><span class="ws">············</span><span style="color:#e6eaee;">sys</span><span style="color:#e6eaee;">.</span><span style="color:#88d8e0;">exit</span><span style="color:#f7c23a;">(</span><span style="color:#f0689a;">4</span><span style="color:#f7c23a;">)</span></div>
<div class="ln" style="top:491.3px"><span class="ws">········</span><span style="color:#f2a23a;">print</span><span style="color:#f7c23a;">(</span><span style="color:#a3d98a;">&quot;</span><span style="color:#f0689a;">\n</span><span style="color:#a3d98a;">ERROR:&quot;</span><span style="color:#f7c23a;">)</span></div>
<div class="ln" style="top:506.3px"><span class="ws">········</span><span style="color:#f2a23a;">print</span><span style="color:#f7c23a;">(</span><span style="color:#a3d98a;">&quot;</span><span style="color:#f0689a;">\t</span><span style="color:#a3d98a;">&quot;</span><span class="ws">·</span><span style="color:#d39036;">+</span><span class="ws">·</span><span style="color:#f2a23a;">str</span><span style="color:#d66fd0;">(</span><span style="color:#9ee0ea;">e</span><span style="color:#d66fd0;">)</span><span style="color:#f7c23a;">)</span></div>
<div class="ln" style="top:521.3px"><span class="ws">········</span><span style="color:#e6eaee;">sys</span><span style="color:#e6eaee;">.</span><span style="color:#88d8e0;">exit</span><span style="color:#f7c23a;">(</span><span style="color:#f0689a;">1</span><span style="color:#f7c23a;">)</span></div>
<div class="ln" style="top:536.3px"><span class="ws">····</span><span style="color:#f2a23a;">except</span><span class="ws">·</span><span style="color:#a3d98a;">Exception</span><span class="ws">·</span><span style="color:#f2a23a;">as</span><span class="ws">·</span><span style="color:#e6eaee;">e</span><span style="color:#e6eaee;">:</span></div>
<div class="ln" style="top:551.3px"><span class="ws">········</span><span style="color:#f2a23a;">print</span><span style="color:#f7c23a;">(</span><span style="color:#a3d98a;">&quot;</span><span style="color:#f0689a;">\n</span><span style="color:#a3d98a;">ERROR:&quot;</span><span style="color:#f7c23a;">)</span></div>
<div class="ln" style="top:566.3px"><span class="ws">········</span><span style="color:#f2a23a;">print</span><span style="color:#f7c23a;">(</span><span style="color:#a3d98a;">&quot;</span><span style="color:#f0689a;">\t</span><span style="color:#a3d98a;">&quot;</span><span class="ws">·</span><span style="color:#d39036;">+</span><span class="ws">·</span><span style="color:#f2a23a;">str</span><span style="color:#d66fd0;">(</span><span style="color:#9ee0ea;">e</span><span style="color:#d66fd0;">)</span><span style="color:#f7c23a;">)</span></div>

</body></html>
